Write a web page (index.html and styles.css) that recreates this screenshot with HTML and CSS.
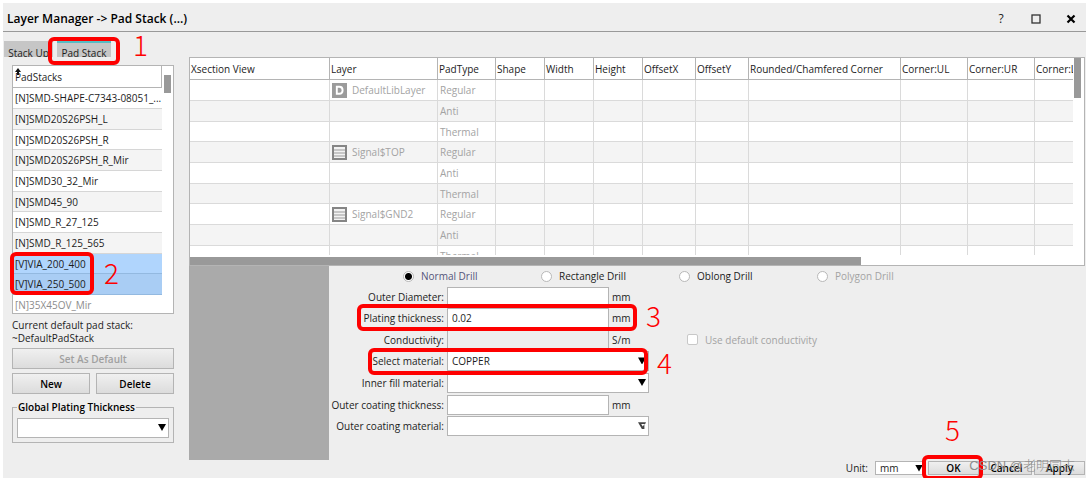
FILE: index.html
```html
<!DOCTYPE html>
<html lang="en">
<head>
<meta charset="utf-8">
<title>Layer Manager</title>
<link rel="stylesheet" href="styles.css">
</head>
<body>
<div class="dialog">
  <header class="titlebar">
    <h1>Layer Manager -&gt; Pad Stack (...)</h1>
    <div class="window-buttons">
      <button type="button" class="win help" aria-label="Help">?</button>
      <button type="button" class="win" aria-label="Maximize"><svg width="10" height="10" viewBox="0 0 10 10"><rect x="1" y="1" width="8" height="8" fill="none" stroke="#333" stroke-width="1.3"/></svg></button>
      <button type="button" class="win" aria-label="Close"><svg width="10" height="10" viewBox="0 0 10 10"><path d="M1.5 1.5 8.5 8.5M8.5 1.5 1.5 8.5" stroke="#000" stroke-width="2.2"/></svg></button>
    </div>
  </header>
  <nav class="tabs">
    <button type="button" class="tab">Stack Up</button>
    <button type="button" class="tab active">Pad Stack</button>
  </nav>
  <main class="body">
    <aside class="side">
      <div class="listbox">
        <div class="list">
          <div class="list-head">PadStacks<svg class="sort" width="6" height="7" viewBox="0 0 6 7"><path d="M3 0 6 4H4V7H2V4H0z" fill="#111"/></svg></div>
          <ul>
            <li>[N]SMD-SHAPE-C7343-08051_...</li>
            <li>[N]SMD20S26PSH_L</li>
            <li>[N]SMD20S26PSH_R</li>
            <li>[N]SMD20S26PSH_R_Mir</li>
            <li>[N]SMD30_32_Mir</li>
            <li>[N]SMD45_90</li>
            <li>[N]SMD_R_27_125</li>
            <li>[N]SMD_R_125_565</li>
            <li class="selected">[V]VIA_200_400</li>
            <li class="selected">[V]VIA_250_500</li>
            <li class="unused">[N]35X45OV_Mir</li>
          </ul>
        </div>
        <div class="list-scroll"><div class="thumb"></div></div>
      </div>
      <p class="current">Current default pad stack:<br>~DefaultPadStack</p>
      <button type="button" class="btn" disabled>Set As Default</button>
      <div class="pair">
        <button type="button" class="btn">New</button>
        <button type="button" class="btn">Delete</button>
      </div>
      <fieldset class="group">
        <legend>Global Plating Thickness</legend>
        <span class="combo"><select aria-label="Global Plating Thickness"><option></option></select></span>
      </fieldset>
    </aside>
    <section class="content">
      <div class="grid">
        <div class="grid-view">
          <table>
            <colgroup><col class="c-view"><col class="c-layer"><col class="c-type"><col class="c-dim"><col class="c-dim"><col class="c-dim"><col class="c-off"><col class="c-off"><col class="c-round"><col class="c-corner"><col class="c-corner"><col></colgroup>
            <thead><tr><th>Xsection View</th><th>Layer</th><th>PadType</th><th>Shape</th><th>Width</th><th>Height</th><th>OffsetX</th><th>OffsetY</th><th>Rounded/Chamfered Corner</th><th>Corner:UL</th><th>Corner:UR</th><th>Corner:LL</th></tr></thead>
            <tbody>
              <tr><td></td><td><span class="layer"><svg width="15" height="15" viewBox="0 0 15 15"><rect width="15" height="15" fill="#9b9b9b"/><path d="M4.8 3.8H7.4Q10.6 3.8 10.6 7.3T7.4 10.8H4.8z" fill="none" stroke="#fff" stroke-width="1.9"/></svg>DefaultLibLayer</span></td><td>Regular</td><td></td><td></td><td></td><td></td><td></td><td></td><td></td><td></td><td></td></tr>
              <tr><td></td><td></td><td>Anti</td><td></td><td></td><td></td><td></td><td></td><td></td><td></td><td></td><td></td></tr>
              <tr><td></td><td></td><td>Thermal</td><td></td><td></td><td></td><td></td><td></td><td></td><td></td><td></td><td></td></tr>
              <tr><td></td><td><span class="layer"><svg width="15" height="15" viewBox="0 0 15 15"><rect x="1" y="1" width="13" height="13" fill="#f2f2f2" stroke="#858585" stroke-width="2"/><path d="M2 5H13M2 8H13M2 11H13" stroke="#999" stroke-width="1.2"/></svg>Signal$TOP</span></td><td>Regular</td><td></td><td></td><td></td><td></td><td></td><td></td><td></td><td></td><td></td></tr>
              <tr><td></td><td></td><td>Anti</td><td></td><td></td><td></td><td></td><td></td><td></td><td></td><td></td><td></td></tr>
              <tr><td></td><td></td><td>Thermal</td><td></td><td></td><td></td><td></td><td></td><td></td><td></td><td></td><td></td></tr>
              <tr><td></td><td><span class="layer"><svg width="15" height="15" viewBox="0 0 15 15"><rect x="1" y="1" width="13" height="13" fill="#f2f2f2" stroke="#858585" stroke-width="2"/><path d="M2 5H13M2 8H13M2 11H13" stroke="#999" stroke-width="1.2"/></svg>Signal$GND2</span></td><td>Regular</td><td></td><td></td><td></td><td></td><td></td><td></td><td></td><td></td><td></td></tr>
              <tr><td></td><td></td><td>Anti</td><td></td><td></td><td></td><td></td><td></td><td></td><td></td><td></td><td></td></tr>
              <tr><td></td><td></td><td>Thermal</td><td></td><td></td><td></td><td></td><td></td><td></td><td></td><td></td><td></td></tr>
            </tbody>
          </table>
        </div>
        <div class="vscroll"><div class="thumb"></div></div>
        <div class="hscroll"><div class="thumb"></div></div>
      </div>
      <div class="detail">
        <div class="preview"></div>
        <form class="form">
          <div class="radios">
            <label class="current-shape"><input type="radio" name="drill" checked>Normal Drill</label>
            <label><input type="radio" name="drill">Rectangle Drill</label>
            <label><input type="radio" name="drill">Oblong Drill</label>
            <label class="off"><input type="radio" name="drill" disabled>Polygon Drill</label>
          </div>
          <div class="fields">
            <label for="od">Outer Diameter:</label><span class="value"><input id="od" type="text">mm</span>
            <label for="pt">Plating thickness:</label><span class="value"><input id="pt" type="text" value="0.02">mm</span>
            <label for="cd">Conductivity:</label><span class="value"><input id="cd" type="text" disabled>S/m</span>
            <label for="sm">Select material:</label><span class="combo"><select id="sm"><option>COPPER</option></select></span>
            <label for="im">Inner fill material:</label><span class="combo"><select id="im"><option></option></select></span>
            <label for="ot">Outer coating thickness:</label><span class="value"><input id="ot" type="text">mm</span>
            <label for="om">Outer coating material:</label><span class="combo dim"><select id="om"><option></option></select></span>
            <label class="check off"><input type="checkbox" disabled>Use default conductivity</label>
          </div>
        </form>
      </div>
    </section>
  </main>
  <footer class="footer">
    <label for="unit">Unit:</label>
    <span class="combo unit"><select id="unit"><option>mm</option></select></span>
    <button type="button" class="btn">OK</button>
    <button type="button" class="btn">Cancel</button>
    <button type="button" class="btn">Apply</button>
  </footer>
  <div class="mark m1"></div><span class="num n1">1</span>
  <div class="mark m2"></div><span class="num n2">2</span>
  <div class="mark m3"></div><span class="num n3">3</span>
  <div class="mark m4"></div><span class="num n4">4</span>
  <div class="mark m5"></div><span class="num n5">5</span>
  <span class="watermark">CSDN @老明同志</span>
</div>
</body>
</html>
```

FILE: styles.css
```css
* { box-sizing: border-box; }
body { margin: 3px; background: #fff; color: #1c1c1c; font: 10px/14px "Open Sans", "Noto Sans", sans-serif; }
button, input, select { font: inherit; color: inherit; margin: 0; }
.dialog { position: relative; background: #eee; padding-bottom: 3px; }

.titlebar { display: flex; align-items: center; justify-content: space-between; height: 29px; padding: 4px 10px 0 4px; border-bottom: 1px solid #999; }
.titlebar h1 { margin: 0; font-size: 12px; line-height: 16px; font-weight: 600; color: #000; }
.window-buttons { display: flex; gap: 25px; }
.win { display: grid; place-items: center; width: 10px; height: 14px; padding: 0; border: 0; background: none; }
.help { font-size: 12px; }

.tabs { display: flex; gap: 4px; padding: 9px 1px 0; height: 25px; }
.tab { width: 49px; height: 16px; padding: 5px 0 0; border: 0; background: #c6c6c6; overflow: hidden; white-space: nowrap; line-height: 14px; }
.tab.active { width: 54px; padding-top: 3px; border-top: 2px solid #57bcc4; }

.body { display: grid; grid-template-columns: 162px minmax(0, 1fr); gap: 15px; padding: 0 1px 0 9px; }
.side { display: flex; flex-direction: column; padding-top: 8px; }
.listbox { display: flex; height: 249px; border: 1px solid #b4b4b4; background: #fff; overflow: hidden; }
.list { flex: 1; min-width: 0; }
.list-head { position: relative; height: 22px; padding: 4px 2px 0; border-bottom: 1px solid #b4b4b4; border-right: 1px solid #b4b4b4; }
.sort { position: absolute; left: 2px; top: 2px; }
.list ul { margin: 0; padding: 0; list-style: none; }
.list li { height: 21px; padding: 3px 2px 0; border-bottom: 1px solid #d6d6d6; white-space: nowrap; overflow: hidden; }
.list li:nth-child(3n) { height: 20px; }
.list li:nth-child(even) { background: #f4f4f4; }
.list .selected { background: #b0d5fd; border-color: #93b9e0; }
.list .selected:nth-child(even) { background: #a9cdf4; }
.list .unused { color: #8c8c8c; background: #fff; border: 0; }
.list-scroll { width: 11px; padding: 9px 2px 0; }
.list-scroll .thumb { height: 18px; background: #999; }
.current { margin: 5px 0 3px; line-height: 13px; }
.btn { height: 21px; padding: 0; border: 1px solid #b4b4b4; background: linear-gradient(#f0f0f0, #dcdcdc); font-weight: 600; color: #000; }
.btn:disabled { color: #a0a0a0; }
.pair { display: grid; grid-template-columns: 1fr 1fr; gap: 6px; margin-top: 4px; }
.group { margin: 6px 0 0; padding: 4px; border: 1px solid #b4b4b4; min-width: 0; }
.group legend { padding: 0 1px; font-weight: 600; color: #000; }

.combo { position: relative; display: block; height: 20px; }
.combo select { appearance: none; display: block; width: 100%; height: 100%; padding: 0 4px; border: 1px solid #b4b4b4; border-radius: 0; background: #fff; }
.combo::after { content: ""; position: absolute; right: 3px; top: 6px; width: 8px; height: 7px; background: #000; clip-path: polygon(0 0, 100% 0, 50% 100%); pointer-events: none; }
.combo.dim::after { background: #444; clip-path: polygon(0 0, 100% 0, 90% 25%, 40% 25%, 60% 60%, 80% 25%, 80% 100%, 50% 100%); }

.grid { display: grid; grid-template-columns: minmax(0, 1fr) 11px; height: 209px; border: 1px solid #b4b4b4; background: #fff; }
.grid-view { height: 197px; overflow: hidden; }
.grid table { width: 100%; table-layout: fixed; border-collapse: separate; border-spacing: 0; color: #a3a3a3; }
.c-view { width: 140px; } .c-layer { width: 108px; } .c-type { width: 58px; } .c-dim { width: 49px; } .c-off { width: 53px; } .c-round { width: 152px; } .c-corner { width: 67px; }
.grid th { height: 22px; padding: 0 1px; text-align: left; font-weight: 400; color: #1c1c1c; border-right: 1px solid #b4b4b4; border-bottom: 1px solid #b4b4b4; white-space: nowrap; overflow: hidden; }
.grid td { height: 21px; padding: 0 2px; border-right: 1px solid #dadada; border-bottom: 1px solid #dadada; white-space: nowrap; }
.grid tr:nth-child(3n) td { height: 20px; }
.grid tbody tr:nth-child(even) { background: #f4f4f4; }
.grid th:last-child, .grid td:last-child { border-right: 0; }
.layer { display: flex; align-items: center; gap: 5px; height: 15px; }
.vscroll { padding: 0 1px; }
.vscroll .thumb { width: 7px; height: 40px; background: #999; }
.hscroll { grid-column: 1 / -1; padding-top: 1px; }
.hscroll .thumb { width: 75%; height: 8px; background: #999; }

.detail { display: flex; }
.preview { width: 140px; height: 194px; background: #aaa; }
.form { flex: 1; }
.radios { display: flex; height: 20px; padding-left: 74px; }
.radios label { display: flex; align-items: center; gap: 7px; width: 138px; white-space: nowrap; }
.radios input { appearance: none; width: 11px; height: 11px; border: 1px solid #b8b8b8; border-radius: 50%; background: #fff; }
.radios input:checked { background: radial-gradient(#000 0 3px, #fff 4px); }
.radios .current-shape { color: #55557a; }
.form .off { color: #a3a3a3; }
.fields { display: grid; grid-template-columns: 115px 202px auto; grid-template-rows: repeat(7, 1fr); column-gap: 3px; height: 151px; justify-content: start; align-items: center; }
.fields > label { grid-column: 1; text-align: right; white-space: nowrap; }
.fields > span { grid-column: 2; }
.value { display: flex; align-items: center; gap: 3px; }
.value input { width: 162px; height: 20px; padding: 0 4px; border: 1px solid #b4b4b4; background: #fff; }
.value input:disabled { background: #eee; }
.fields > .check { grid-column: 3; grid-row: 3; display: flex; align-items: center; gap: 7px; padding-left: 35px; }
.check input { appearance: none; width: 11px; height: 11px; border: 1px solid #c8c8c8; border-radius: 2px; background: #fff; }

.footer { display: flex; align-items: center; justify-content: flex-end; gap: 2px; height: 15px; padding-right: 1px; }
.footer label { margin-right: 5px; }
.footer .combo { width: 51px; height: 14px; }
.footer .combo::after { top: 4px; }
.footer .btn { width: 51px; height: 14px; line-height: 12px; }
.footer select { line-height: 12px; }

.mark { position: absolute; border: 4px solid #fe0000; border-radius: 6px; pointer-events: none; }
.m1 { left: 45px; top: 34px; width: 72px; height: 28px; }
.m2 { left: 7px; top: 249px; width: 84px; height: 43px; }
.m3 { left: 354px; top: 301px; width: 280px; height: 27px; }
.m4 { left: 365px; top: 345px; width: 280px; height: 27px; }
.m5 { right: 103px; top: 452px; width: 61px; height: 25px; }
.num { position: absolute; color: #fe0000; font: 300 28px/28px "Noto Sans CJK SC", sans-serif; }
.n1 { left: 130px; top: 27px; }
.n2 { left: 101px; top: 255px; }
.n3 { left: 643px; top: 298px; }
.n4 { left: 654px; top: 345px; }
.n5 { right: 126px; top: 412px; }
.watermark { position: absolute; right: 11px; top: 453px; color: #8c8c8c; font: 300 13px/20px "Liberation Sans", "Noto Sans CJK SC", sans-serif; white-space: nowrap; }
```
